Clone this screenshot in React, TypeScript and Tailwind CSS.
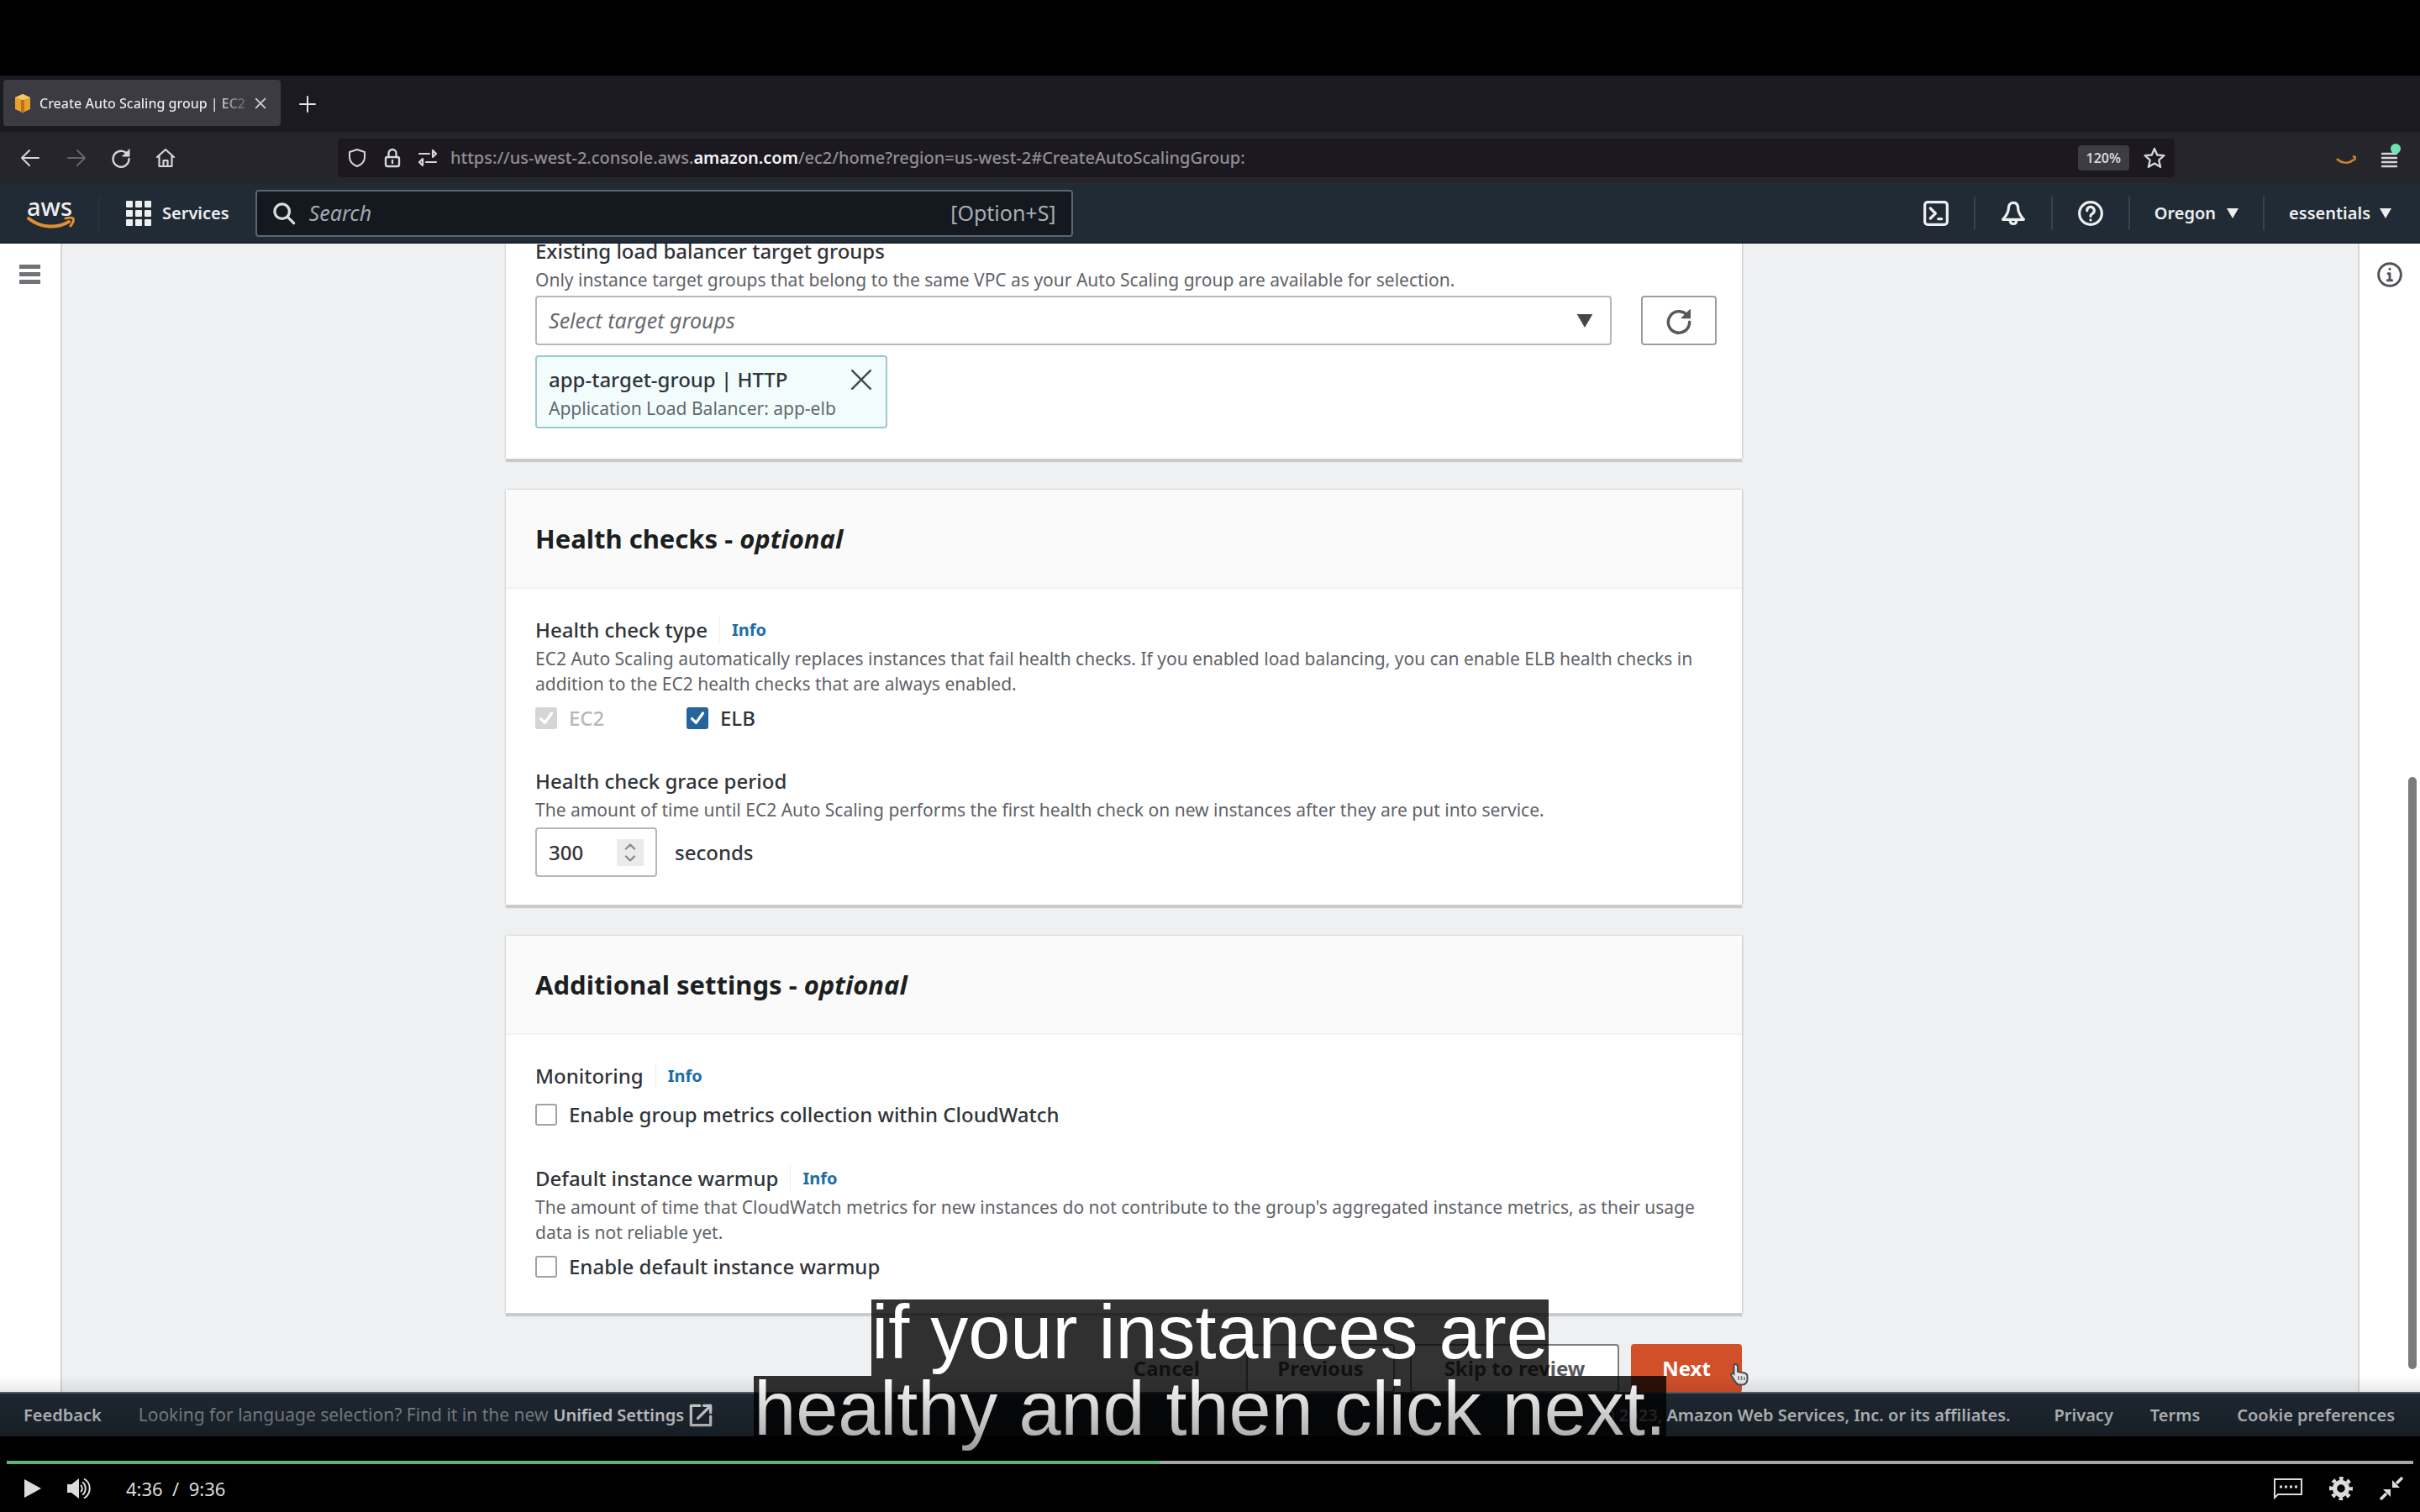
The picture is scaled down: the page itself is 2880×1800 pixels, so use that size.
import React from "react";

type IconProps = { className?: string; children: React.ReactNode; box?: string; width?: number };

function Icon({ className = "", children, box = "0 0 24 24", width = 2 }: IconProps) {
  return (
    <svg
      viewBox={box}
      className={`shrink-0 ${className}`}
      fill="none"
      stroke="currentColor"
      strokeWidth={width}
      strokeLinecap="round"
      strokeLinejoin="round"
      aria-hidden="true"
    >
      {children}
    </svg>
  );
}

function Caret({ className = "" }: { className?: string }) {
  return (
    <svg viewBox="0 0 14 12" className={`shrink-0 ${className}`} fill="currentColor" aria-hidden="true">
      <path d="M0 0h14L7 12z" />
    </svg>
  );
}

function TabStrip() {
  return (
    <div className="flex h-[67px] items-start bg-[#1b1a20] pl-1 pt-[5px] text-[#e6e5ea]">
      <div className="flex h-[55px] w-[330px] items-center rounded bg-[#3c3b43] pl-[11px] pr-4">
        <svg viewBox="0 0 24 24" className="size-6 shrink-0" aria-hidden="true">
          <path d="M12 1l9 4v14l-9 4-9-4V5z" fill="#e8a02c" />
          <path d="M12 1l9 4-9 3-9-3z" fill="#f7c667" />
          <path d="M10 8h4v15l-2 .6-2-.6z" fill="#b8741a" />
        </svg>
        <span className="ml-2 min-w-0 flex-1 overflow-hidden whitespace-nowrap bg-linear-to-r from-[#efeef2] from-85% to-[#5b5a62] bg-clip-text text-base font-medium text-transparent">
          Create Auto Scaling group | EC2
        </span>
        <button aria-label="Close tab" className="ml-2 text-[#c9c8ce]">
          <Icon className="size-4" width={3}>
            <path d="M4 4l16 16M20 4L4 20" />
          </Icon>
        </button>
      </div>
      <button aria-label="New tab" className="ml-5 flex h-[58px] items-center">
        <Icon className="size-6" width={2}>
          <path d="M12 3v18M3 12h18" />
        </Icon>
      </button>
    </div>
  );
}

function NavBar() {
  return (
    <div className="flex h-[61px] items-center bg-[#27252c] pl-6 pr-6 text-[#d6d5da]">
      <button aria-label="Back">
        <Icon className="size-6">
          <path d="M2 12h20M11 3l-9 9 9 9" />
        </Icon>
      </button>
      <button aria-label="Forward" className="ml-[31px] text-[#65646b]">
        <Icon className="size-6">
          <path d="M22 12H2M13 3l9 9-9 9" />
        </Icon>
      </button>
      <button aria-label="Reload" className="ml-[29px]">
        <Icon className="size-6" width={2.4}>
          <path d="M20.500 9A9.500 9.500 0 1 0 21.500 13" />
          <path d="M22 2v8h-8z" fill="currentColor" strokeWidth="1" />
        </Icon>
      </button>
      <button aria-label="Home" className="ml-[29px]">
        <Icon className="size-6" width={2.2}>
          <path d="M2 11L12 2l10 9M4.500 10v12h15V10" />
          <path d="M9.500 22v-7h5v7" />
        </Icon>
      </button>
      <div className="ml-[193px] flex h-[46px] flex-1 items-center rounded bg-[#1b191f] pl-[11px] pr-2.5">
        <Icon className="size-6">
          <path d="M12 2l9 3v6c0 6-4 9-9 11-5-2-9-5-9-11V5z" />
        </Icon>
        <Icon className="ml-[18px] size-6" width={2.4}>
          <rect x="4" y="11" width="16" height="11" rx="2" />
          <path d="M7.500 11V6.500a4.500 4.500 0 0 1 9 0V11M12 15v3" />
        </Icon>
        <Icon className="ml-[18px] size-6" width={2.2}>
          <path d="M2 7h12M10 17h12M18 3v8l4-4zM6 13v8l-4-4z" />
        </Icon>
        <div className="ml-[15px] flex-1 whitespace-nowrap text-[20px] font-medium leading-6 text-[#8f8e95]">
          https://us-west-2.console.aws.<span className="font-semibold text-[#f4f3f7]">amazon.com</span>
          /ec2/home?region=us-west-2#CreateAutoScalingGroup:
        </div>
        <span className="rounded bg-[#3d3b43] px-2.5 text-[16px] font-semibold leading-[30px]">120%</span>
        <button aria-label="Bookmark" className="ml-4">
          <Icon className="size-7">
            <path d="M12 2.500l2.800 6.500 7 .6-5.300 4.700 1.600 7-6.100-3.800-6.100 3.800 1.600-7L2.200 9.600l7-.6z" />
          </Icon>
        </button>
      </div>
      <svg viewBox="0 0 24 24" className="ml-[192px] size-6 shrink-0" fill="none" aria-hidden="true">
        <path d="M1 13c6 6 15 6 20 1M20 10l3 1-1 4" stroke="#c98430" strokeWidth="2.500" />
      </svg>
      <button aria-label="Menu" className="relative ml-7">
        <Icon className="size-6" width={2.4}>
          <path d="M3 7h17M3 12h17M3 17h17M3 22h17" />
        </Icon>
        <span className="absolute -right-px top-[-5px] size-3 rounded-full bg-[#6fe3b0]" />
      </button>
    </div>
  );
}

function Divider() {
  return <span className="h-10 w-0.5 bg-[#36424d]" />;
}

function AwsHeader() {
  return (
    <header className="flex h-[72px] items-center border-b-2 border-[#1a222b] bg-[#212b35] pl-8 pr-[34px] pt-0.5 text-[#eceef0]">
      <a href="#home" aria-label="aws" className="flex w-[57px] flex-col">
        <span className="text-[29px] font-medium leading-[22px]">aws</span>
        <svg viewBox="0 0 57 16" className="h-4 w-full" fill="none" aria-hidden="true">
          <path d="M2 3c15 12 34 12 48 4" stroke="#e0902f" strokeWidth="4" strokeLinecap="round" />
          <path d="M46 3c4-1 8-1 9 0s0 6-3 9" stroke="#e0902f" strokeWidth="3" strokeLinecap="round" />
        </svg>
      </a>
      <span className="ml-7 h-10 w-0.5 bg-[#27323d]" />
      <button className="ml-[31px] flex items-center gap-[13px] text-[20px] font-semibold">
        <svg viewBox="0 0 30 30" className="size-[30px]" fill="currentColor" aria-hidden="true">
          {[0, 11, 22].map((y) => [0, 11, 22].map((x) => <rect key={`${x}-${y}`} x={x} y={y} width="8" height="8" rx="1" />))}
        </svg>
        Services
      </button>
      <label className="ml-[31px] flex h-14 w-[973px] items-center rounded border-2 border-[#5d666f] bg-[#14181f] px-[18px] text-2xl">
        <Icon className="size-7 text-[#d8dbde]" width={2.8}>
          <circle cx="10" cy="10" r="7.500" />
          <path d="M15.500 15.500L22 22" />
        </Icon>
        <span className="sr-only">Search services</span>
        <input type="search" placeholder="Search" className="ml-4 min-w-0 flex-1 bg-transparent text-[25px] italic outline-none placeholder:text-[#a3a9af]" />
        <span className="text-[25px] text-[#a9aeb4]">[Option+S]</span>
      </label>
      <div className="ml-auto flex items-center gap-[29px] text-[20px] font-semibold">
        <button aria-label="CloudShell">
          <Icon className="size-8" width={2.4}>
            <rect x="2" y="2" width="20" height="20" rx="2.500" />
            <path d="M7 7.500l4.500 4.500L7 16.500M14 17h3" />
          </Icon>
        </button>
        <Divider />
        <button aria-label="Notifications">
          <Icon className="size-8" width={2.4}>
            <path d="M12 2.500c-3 0-4.300 2.500-4.300 5.500 0 4-2.200 6-5 9.500h18.600c-2.800-3.500-5-5.500-5-9.500 0-3-1.300-5.500-4.300-5.500z" />
            <path d="M9 18c.5 4.500 5.500 4.500 6 0" />
          </Icon>
        </button>
        <Divider />
        <button aria-label="Help">
          <Icon className="size-8" width={2.4}>
            <circle cx="12" cy="12" r="10" />
            <path d="M8.800 9.500a3.200 3.200 0 1 1 4.800 2.700c-1 .6-1.600 1-1.600 2.300M12 17.800v.2" />
          </Icon>
        </button>
        <Divider />
        <button className="flex items-center gap-[13px]">
          Oregon <Caret className="h-3 w-3.5" />
        </button>
        <Divider />
        <button className="flex items-center gap-[11px]">
          essentials <Caret className="h-3 w-3.5" />
        </button>
      </div>
    </header>
  );
}

function Card({ title, children, className = "" }: { title?: string; children: React.ReactNode; className?: string }) {
  return (
    <section className="bg-white shadow-[0_4px_1px_#c9cbcc,1px_0_2px_#c3c6c8,-1px_0_2px_#d5d7d9]">
      {title && (
        <h2 className="border-b-2 border-[#f1f2f2] bg-[#fafafa] px-[35px] pb-9 pt-9 text-[31px] font-bold leading-11 text-[#1c1f22]">
          {title} - <em>optional</em>
        </h2>
      )}
      <div className={`px-[35px] ${className}`}>{children}</div>
    </section>
  );
}

function Label({ children, info, htmlFor }: { children: React.ReactNode; info?: boolean; htmlFor?: string }) {
  return (
    <div className="flex items-center text-2xl font-medium leading-[30px]">
      {htmlFor ? <label htmlFor={htmlFor}>{children}</label> : <h3>{children}</h3>}
      {info && (
        <a href="#info" className="ml-3.5 border-l border-[#eceeef] pl-3.5 text-[20px] font-bold leading-[30px] text-[#1a6ea5]">
          Info
        </a>
      )}
    </div>
  );
}

function Description({ children }: { children: React.ReactNode }) {
  return <p className="mt-1 text-[21px] leading-[30px] text-[#5f6368]">{children}</p>;
}

function Check({ label, checked, disabled }: { label: string; checked?: boolean; disabled?: boolean }) {
  return (
    <label className={`flex items-center gap-3.5 text-2xl font-medium leading-[30px] ${disabled ? "text-[#b4b8bb]" : "text-[#303439]"}`}>
      <span className="grid">
        <input
          type="checkbox"
          defaultChecked={checked}
          disabled={disabled}
          className="col-start-1 row-start-1 size-[26px] appearance-none rounded-[3px] border-2 border-[#a0a4a7] bg-white checked:border-[#25659c] checked:bg-[#25659c] disabled:border-[#d3d5d6] disabled:bg-[#d3d5d6]"
        />
        {checked && (
          <Icon className="pointer-events-none col-start-1 row-start-1 size-[26px] text-white" width={3}>
            <path d="M6 12.500l4.500 4.500L18 6.500" />
          </Icon>
        )}
      </span>
      {label}
    </label>
  );
}

function TargetGroups() {
  return (
    <Card className="pb-9">
      <Label htmlFor="groups">Existing load balancer target groups</Label>
      <Description>Only instance target groups that belong to the same VPC as your Auto Scaling group are available for selection.</Description>
      <div className="mt-1 flex">
        <div className="grid flex-1 items-center">
          <select
            id="groups"
            className="col-start-1 row-start-1 h-[59px] w-full appearance-none rounded border-2 border-[#b4b8ba] bg-white px-3.5 text-[25px] italic text-[#676b70]"
          >
            <option>Select target groups</option>
          </select>
          <Caret className="pointer-events-none col-start-1 row-start-1 mr-[22px] h-4 w-5 justify-self-end text-[#44484c]" />
        </div>
        <button
          aria-label="Refresh"
          className="ml-[35px] mr-[-5px] flex h-[59px] w-[90px] items-center justify-center rounded border-2 border-[#9a9ea1] text-[#55595d]"
        >
          <Icon className="size-8" width={2.6}>
            <path d="M20 8A9.500 9.500 0 1 0 21.500 13" />
            <path d="M22 2v7.500h-7.500z" fill="currentColor" strokeWidth="1" />
          </Icon>
        </button>
      </div>
      <div className="mt-3 flex h-[87px] w-[419px] items-start justify-between rounded border-2 border-[#9cc9ca] bg-[#f2fcfd] pl-3.5 pr-4 pt-3">
        <div>
          <p className="text-2xl font-medium leading-[30px] text-[#303439]">app-target-group | HTTP</p>
          <p className="mt-1 text-[21px] leading-[30px] text-[#5f6b6e]">Application Load Balancer: app-elb</p>
        </div>
        <button aria-label="Remove app-target-group" className="pt-0.5 text-[#45494d]">
          <Icon className="size-[26px]" width={2.2}>
            <path d="M2 2l20 20M22 2L2 22" />
          </Icon>
        </button>
      </div>
    </Card>
  );
}

function HealthChecks() {
  return (
    <Card title="Health checks" className="pb-[33px] pt-[34px]">
      <Label info>Health check type</Label>
      <Description>
        EC2 Auto Scaling automatically replaces instances that fail health checks. If you enabled load balancing, you can enable ELB health checks
        in addition to the EC2 health checks that are always enabled.
      </Description>
      <div className="mt-[11px] flex">
        <div className="w-[180px]">
          <Check label="EC2" checked disabled />
        </div>
        <Check label="ELB" checked />
      </div>
      <div className="mt-[45px]">
        <Label htmlFor="grace">Health check grace period</Label>
        <Description>The amount of time until EC2 Auto Scaling performs the first health check on new instances after they are put into service.</Description>
        <div className="mt-1.5 flex items-center text-2xl font-medium">
          <div className="flex h-[59px] w-[145px] items-center rounded border-2 border-[#b4b8ba] pl-3.5 pr-3.5">
            <input
              id="grace"
              type="number"
              defaultValue={300}
              className="min-w-0 flex-1 appearance-none bg-transparent outline-none [appearance:textfield] [&::-webkit-inner-spin-button]:appearance-none"
            />
            <span className="flex h-8 w-8 items-center justify-center bg-[#ebebec] text-[#8a8c8e]">
              <Icon className="h-7 w-5" width={2.4} box="0 0 20 28">
                <path d="M5 9.500l5-5 5 5M5 18.500l5 5 5-5" />
              </Icon>
            </span>
          </div>
          <span className="ml-[21px]">seconds</span>
        </div>
      </div>
    </Card>
  );
}

function AdditionalSettings() {
  return (
    <Card title="Additional settings" className="pb-10 pt-[34px]">
      <Label info>Monitoring</Label>
      <div className="mt-4">
        <Check label="Enable group metrics collection within CloudWatch" />
      </div>
      <div className="mt-[46px]">
        <Label info>Default instance warmup</Label>
        <Description>
          The amount of time that CloudWatch metrics for new instances do not contribute to the group's aggregated instance metrics, as their usage
          data is not reliable yet.
        </Description>
        <div className="mt-[11px]">
          <Check label="Enable default instance warmup" />
        </div>
      </div>
    </Card>
  );
}

function HandPointer() {
  return (
    <svg viewBox="0 0 22 28" className="absolute -right-2 top-[22px] h-7 w-[22px]" aria-hidden="true">
      <path
        d="M6 2c2 0 3 1 3 3v6l8 1.500c2.500.5 3.500 2 3.500 4V20c0 3-2 6.500-6 6.500h-3c-3 0-4.500-2-6-4.500l-4-6.500c-1-2 1.500-3.500 3-2V5c0-2 .5-3 1.500-3z"
        fill="#e6e6e6"
        stroke="#4b4b4b"
        strokeWidth="2"
      />
      <path d="M10 16v5M13.500 16v5M17 17v4" stroke="#777" strokeWidth="1.500" />
    </svg>
  );
}

function Actions() {
  return (
    <div className="mt-[37px] flex justify-end text-2xl font-bold text-[#54585c]">
      <button className="mr-[55px]">Cancel</button>
      <button className="h-[58px] w-[177px] rounded border-2 border-[#7c8083] bg-white">Previous</button>
      <button className="ml-[18px] h-[58px] w-[249px] rounded border-2 border-[#7c8083] bg-white">Skip to review</button>
      <button className="relative ml-[14px] h-[58px] w-[132px] rounded bg-[#d1502a] text-white">
        Next
        <HandPointer />
      </button>
    </div>
  );
}

function AwsFooter() {
  return (
    <footer className="flex h-[53px] shrink-0 items-center whitespace-nowrap border-t-2 border-[#59626a] bg-[#212b36] pl-7 pr-[30px] text-[20px] font-semibold text-[#d5d8db]">
      <a href="#feedback">Feedback</a>
      <p className="ml-11 flex items-center text-[21px] font-normal text-[#8d959d]">
        Looking for language selection? Find it in the new
        <a href="#settings" className="ml-1.5 text-[20px] font-semibold text-[#e4e6e8]">
          Unified Settings
        </a>
      </p>
      <Icon className="ml-1.5 size-7 text-[#e4e6e8]" width={2.8}>
        <path d="M11 2H2v20h20v-9M15 2h7v7M22 2L9 15" />
      </Icon>
      <p className="ml-auto">© 2023, Amazon Web Services, Inc. or its affiliates.</p>
      <a href="#privacy" className="ml-[52px]">
        Privacy
      </a>
      <a href="#terms" className="ml-11">
        Terms
      </a>
      <a href="#cookies" className="ml-11">
        Cookie preferences
      </a>
    </footer>
  );
}

function PlayerControls() {
  return (
    <div className="relative z-20 h-[90px] shrink-0 px-2 pt-[29px] text-[#dcdcdc]">
      <div role="progressbar" aria-valuenow={276} aria-valuemax={576} aria-label="Playback" className="h-1 bg-[#a6a6a6]">
        <div className="h-1 bg-[#62b27a]" style={{ width: `${(276 / 576) * 100}%` }} />
      </div>
      <div className="flex items-center pl-[21px] pr-3 pt-3">
        <button aria-label="Play">
          <svg viewBox="0 0 20 22" className="h-[22px] w-5" fill="currentColor" aria-hidden="true">
            <path d="M0 0l20 11L0 22z" />
          </svg>
        </button>
        <button aria-label="Volume" className="ml-[31px]">
          <svg viewBox="0 0 30 26" className="h-[26px] w-[30px]" fill="none" stroke="currentColor" strokeWidth="2" aria-hidden="true">
            <path d="M0 8h5l9-7v24l-9-7H0z" fill="currentColor" stroke="none" />
            <path d="M16 9c2.500 2 2.500 6 0 8M18 5.500c5 3.500 5 11.500 0 15M20 1.500c9 5 9 18 0 23" />
          </svg>
        </button>
        <span className="ml-10 text-[22px] leading-[34px]">
          4:36&nbsp; /&nbsp; 9:36
        </span>
        <button aria-label="Captions" className="ml-auto">
          <svg viewBox="0 0 34 26" className="h-[26px] w-[34px]" fill="none" stroke="currentColor" strokeWidth="2" aria-hidden="true">
            <path d="M1 2h32v18H5l-4 4z" />
            <path d="M7 11h3M13 11h3M19 11h3M25 11h3" strokeWidth="3" />
          </svg>
        </button>
        <button aria-label="Settings" className="ml-8">
          <svg viewBox="0 0 28 28" className="size-7" fill="none" stroke="currentColor" aria-hidden="true">
            <circle cx="14" cy="14" r="7.500" strokeWidth="5.500" />
            <circle cx="14" cy="14" r="12" strokeWidth="4" strokeDasharray="4.712 4.712" strokeDashoffset="2.356" />
          </svg>
        </button>
        <button aria-label="Exit full screen" className="ml-8">
          <svg viewBox="0 0 28 28" className="size-7" fill="currentColor" stroke="currentColor" aria-hidden="true">
            <path d="M27 1l-7 7M1 27l7-7" strokeWidth="3.500" />
            <path d="M15 13V4l9 9zM13 15v9l-9-9z" stroke="none" />
          </svg>
        </button>
      </div>
    </div>
  );
}

function Captions() {
  return (
    <div className='pointer-events-none absolute inset-x-0 bottom-[71px] z-10 flex flex-col items-center whitespace-nowrap font-["Liberation_Sans",sans-serif] text-[90px] leading-[79px] text-white'>
      <p className="bg-black/80 pb-3">if your instances are</p>
      <p className="bg-black/80 pb-3">healthy and then click next.</p>
      <div className="absolute inset-x-0 bottom-0 h-[91px] bg-linear-to-b from-transparent to-black/40" />
    </div>
  );
}

export default function App() {
  return (
    <div className='relative flex h-screen flex-col overflow-hidden bg-black pt-[90px] font-["Noto_Sans",sans-serif] text-[#303439]'>
      <TabStrip />
      <NavBar />
      <AwsHeader />
      <main className="flex min-h-0 flex-1 overflow-hidden bg-[#eff0f1]">
        <aside className="w-[74px] shrink-0 border-r-2 border-[#d2d5d7] bg-white pl-[23px] pt-[25px]">
          <button aria-label="Open navigation" className="flex w-[25px] flex-col gap-1 text-[#707376]">
            <span className="h-[5px] w-full bg-current" />
            <span className="h-[5px] w-full bg-current" />
            <span className="h-[5px] w-full bg-current" />
          </button>
        </aside>
        <div className="-mt-1.5 flex min-w-0 flex-1 flex-col pl-[528px] pr-[733px]">
          <TargetGroups />
          <div className="h-[37px] shrink-0" />
          <HealthChecks />
          <div className="h-[37px] shrink-0" />
          <AdditionalSettings />
          <Actions />
        </div>
        <aside className="flex w-[74px] shrink-0 justify-between border-l-2 border-[#d2d5d7] bg-white pl-5 pr-1 pt-[21px]">
          <button aria-label="Open information panel" className="flex h-8 items-center text-[#505458]">
            <Icon className="size-8" width={2.2}>
              <circle cx="12" cy="12" r="10" />
              <path d="M12 7v.2M10.500 11H12v5.500M10 17h4" />
            </Icon>
          </button>
          <div className="mb-[27px] mt-[614px] w-2.5 rounded-full bg-[#7a7b7c]" />
        </aside>
      </main>
      <AwsFooter />
      <PlayerControls />
      <Captions />
    </div>
  );
}
